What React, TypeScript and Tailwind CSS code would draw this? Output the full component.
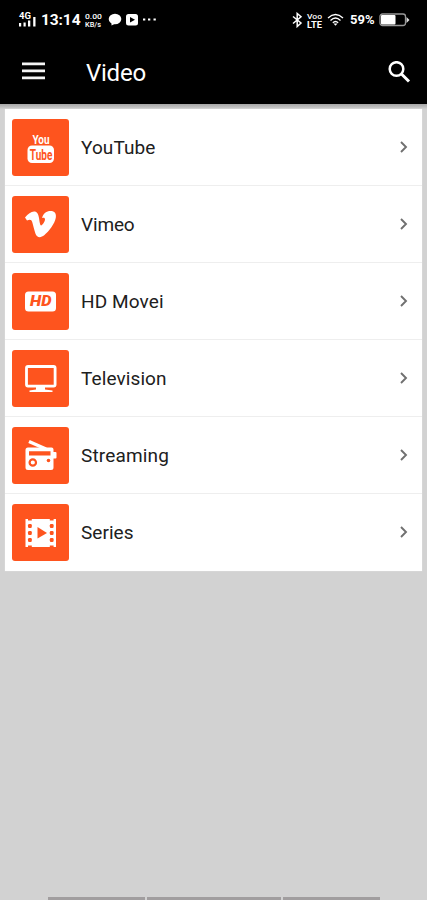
import React from "react";

const O = "#fe541e";

function YouTubeIcon() {
  return (
    <svg width="57" height="57" viewBox="0 0 57 57" fill="#fff" fontFamily="Roboto, sans-serif">
      <text x="20.5" y="24.500" fontSize="13.500" fontWeight="700" textLength="17" lengthAdjust="spacingAndGlyphs">You</text>
      <rect x="15.5" y="26.500" width="26.5" height="17.500" rx="4.5" />
      <text x="17.8" y="41" fontSize="14" fontWeight="700" fill={O} textLength="22.5" lengthAdjust="spacingAndGlyphs">Tube</text>
    </svg>
  );
}

function VimeoIcon() {
  return (
    <svg width="57" height="57" viewBox="0 0 57 57" fill="#fff">
      <path d="M13 21.500c3-3.500 6-6 9-6 3.200 0 4.300 2.500 5 6.500.6 3.500 1 7.500 2.100 7.500 1.200 0 3.900-4 3.900-6.200 0-1.600-1.200-2-3-1.300 1.200-4.500 4.500-7 8.500-7 4.200 0 6 2.500 5.300 6.800-1 6-6.800 13.500-11.600 17.500-3.200 2.600-7.200 2.800-8.700-1.500-1.300-3.700-2.300-8.500-3.300-11.800-.8-2.300-2-2.800-5.200-1.500z" />
    </svg>
  );
}

function HdIcon() {
  return (
    <svg width="57" height="57" viewBox="0 0 57 57" fill="#fff">
      <rect x="13" y="18.500" width="31" height="20" rx="3.5" />
      <text x="18" y="33.4" fontSize="14" fontWeight="900" fontStyle="italic" fontFamily="Roboto, sans-serif" fill={O} textLength="21.5" lengthAdjust="spacingAndGlyphs">HD</text>
    </svg>
  );
}

function TvIcon() {
  return (
    <svg width="57" height="57" viewBox="0 0 57 57">
      <rect x="14.5" y="16.5" width="28.6" height="19.6" rx="1.5" fill="none" stroke="#fff" strokeWidth="2.8" />
      <path d="M24 37h9v2.5l7.500 1v1.500H17.500v-1.500l6.500-1z" fill="#fff" />
    </svg>
  );
}

function RadioIcon() {
  return (
    <svg width="57" height="57" viewBox="0 0 57 57">
      <path d="M17 14.5 34 22" stroke="#fff" strokeWidth="3.4" />
      <path d="M16 20.500h23.500q2 0 2 2v2.500h2q1 0 1 1v4.500q0 1-1 1h-2v9q0 2.500-2.500 2.500H16q-2.500 0-2.500-2.500V23q0-2.500 2.500-2.500z" fill="#fff" />
      <path d="M17 24.300h21.500v4.200H17z" fill={O} />
      <circle cx="20.800" cy="35.500" r="4.800" fill="#fff" />
      <circle cx="20.800" cy="35.500" r="3.200" fill="none" stroke={O} strokeWidth="2.200" />
      <circle cx="36.500" cy="33.500" r="1.800" fill={O} />
    </svg>
  );
}

function FilmIcon() {
  const holes = [21.5, 28.5, 35.5];
  return (
    <svg width="57" height="57" viewBox="0 0 57 57">
      <path d="M13.500 15h30.500v28H13.500z" fill="#fff" />
      <path d="M16 14h3.800v2.500H16zM37.800 14h3.800v2.500h-3.800zM16 41.500h3.800v2.500H16zM37.800 41.500h3.800v2.500h-3.800z" fill={O} />
      {holes.map((y) => (
        <g key={y} fill={O}>
          <rect x="16" y={y - 1.4} width="3.800" height="3.800" rx="1.200" />
          <rect x="37.800" y={y - 1.4} width="3.800" height="3.800" rx="1.200" />
        </g>
      ))}
      <path d="M25.500 23v11.500l9.500-5.500z" fill={O} />
    </svg>
  );
}

const rows = [
  { name: "YouTube", icon: <YouTubeIcon />, tracking: "tracking-[0.100px]" },
  { name: "Vimeo", icon: <VimeoIcon />, tracking: "tracking-[-0.150px]" },
  { name: "HD Movei", icon: <HdIcon />, tracking: "tracking-[0.100px]" },
  { name: "Television", icon: <TvIcon />, tracking: "tracking-[0.100px]" },
  { name: "Streaming", icon: <RadioIcon />, tracking: "tracking-[0.150px]" },
  { name: "Series", icon: <FilmIcon />, tracking: "tracking-[0.050px]" },
];

function StatusBar() {
  return (
    <div className="flex h-10 items-center justify-between pl-[18px] pr-[17px] text-white">
      <div className="flex items-center">
        <svg width="19" height="18" viewBox="0 0 19 18" fill="#fff">
          <text x="1" y="7.800" fontSize="9" fontWeight="700" fontFamily="Roboto, sans-serif" textLength="12" lengthAdjust="spacingAndGlyphs">4G</text>
          <path d="M1 12h2.200v3.500H1zM5.500 11.500h2.200v4H5.500zM10 9.500h2.300v6H10zM15.200 6h2.300v9.500h-2.300z" />
        </svg>
        <span className="ml-[4px] w-[40px] text-[15.500px] font-bold leading-5 tracking-[-0.100px]">13:14</span>
        <svg className="ml-[3px]" width="19" height="18" viewBox="0 0 19 18" fill="#fff" fontFamily="Roboto, sans-serif" fontWeight="500">
          <text x="1" y="7.500" fontSize="7.500" textLength="17" lengthAdjust="spacingAndGlyphs">0.00</text>
          <text x="1" y="16.200" fontSize="7.500" textLength="16" lengthAdjust="spacingAndGlyphs">KB/s</text>
        </svg>
        <svg className="ml-[5px]" width="50" height="14" viewBox="0 0 50 14" fill="#fff">
          <ellipse cx="7" cy="6" rx="6.300" ry="5.300" />
          <path d="M3.500 9.500v3l4-2z" />
          <rect x="18" y="1" width="12" height="11.500" rx="2.500" />
          <path d="M22 4v5.500l5-2.700z" fill="#000" />
          <path d="M35 5.500h2.300v2H35zM40 5.500h2.300v2H40zM45.500 5.500h2.300v2h-2.300z" />
        </svg>
      </div>
      <div className="flex items-center">
        <svg width="11" height="16" viewBox="0 0 11 16" fill="none" stroke="#fff" strokeWidth="1.500">
          <path d="m1 4.500 8 6.500-3.800 3.500v-13L9 4.700 1 11.500" />
        </svg>
        <div className="ml-[3px] flex h-[18px] w-[17px] flex-col items-center justify-center">
          <svg width="17" height="8" viewBox="0 0 17 8" fill="#fff" fontFamily="Roboto, sans-serif">
            <text x="1" y="6.800" fontSize="8" fontWeight="500" textLength="15" lengthAdjust="spacingAndGlyphs">Voo</text>
          </svg>
          <svg width="17" height="9" viewBox="0 0 17 9" fill="#fff" fontFamily="Roboto, sans-serif">
            <text x="1" y="8" fontSize="9" fontWeight="700" textLength="15" lengthAdjust="spacingAndGlyphs">LTE</text>
          </svg>
        </div>
        <svg className="ml-[4px]" width="17" height="14" viewBox="0 0 17 14" fill="none" stroke="#fff" strokeWidth="1.300">
          <path d="M1 5q7.500-7 15 0M3.500 7.500q5-5 10 0M5.800 9.800q2.700-2.600 5.400 0" />
          <path d="m8.500 12.800-2-2.300h4z" fill="#fff" stroke="none" />
        </svg>
        <span className="ml-[6px] w-[26px] text-[13px] font-bold leading-5 tracking-[0.100px]">59%</span>
        <svg className="ml-[3px]" width="31" height="14" viewBox="0 0 31 14">
          <rect x="1" y="1" width="25.500" height="11.500" rx="2.500" fill="none" stroke="#999" strokeWidth="1.300" />
          <rect x="2" y="2" width="14.500" height="9.500" rx="1" fill="#fff" />
          <path d="M27.500 4 30.500 7l-3 3z" fill="#ddd" />
        </svg>
      </div>
    </div>
  );
}

export default function App() {
  return (
    <div className="flex h-[900px] w-[427px] flex-col overflow-hidden bg-[#d2d2d2] font-['Roboto',sans-serif]">
      <header className="h-[104px] shrink-0 bg-black text-white">
        <StatusBar />
        <div className="flex h-16 items-center pl-[22px] pr-[16px]">
          <svg width="24" height="20" viewBox="0 0 24 20" fill="#f5f5f5">
            <path d="M0 .5h23v2.800H0zM0 7.500h23v2.800H0zM0 14.500h23v2.800H0z" />
          </svg>
          <h1 className="ml-[40px] pt-[2px] text-[24px] font-normal leading-8 tracking-[-0.250px]">Video</h1>
          <svg className="ml-auto" width="23" height="23" viewBox="0 0 23 23" fill="none" stroke="#fff">
            <circle cx="8.500" cy="8" r="6.800" strokeWidth="2.500" />
            <path d="m13.500 13 7.500 7.500" strokeWidth="3" />
          </svg>
        </div>
      </header>
      <div className="h-[5px] shrink-0 bg-gradient-to-b from-[#a6a6a6] to-[#d0d0d0]" />
      <main className="mx-[5px] h-[462px] shrink-0 bg-white shadow-[0_0_1px_#eee]">
        {rows.map((row) => (
          <div key={row.name} className="flex h-[77px] items-center border-b border-[#eeeeee] pl-[7px] pr-[12px] last:border-white">
            <div className="flex size-[57px] shrink-0 items-center justify-center overflow-hidden rounded-[3px] bg-[#fe541e]">{row.icon}</div>
            <span className={`ml-[12px] pt-[2px] text-[19px] leading-6 text-[#202020] ${row.tracking}`}>{row.name}</span>
            <svg className="ml-auto" width="12" height="14" viewBox="0 0 12 14" fill="none" stroke="#707070" strokeWidth="1.900">
              <path d="m3 2 5 5-5 5" />
            </svg>
          </div>
        ))}
      </main>
      <footer className="mt-auto flex h-[3px] gap-[2px] pl-[48px]">
        <div className="w-[97px] bg-[#a19e9f]" />
        <div className="w-[134px] bg-[#a19e9f]" />
        <div className="w-[97px] bg-[#a19e9f]" />
      </footer>
    </div>
  );
}
